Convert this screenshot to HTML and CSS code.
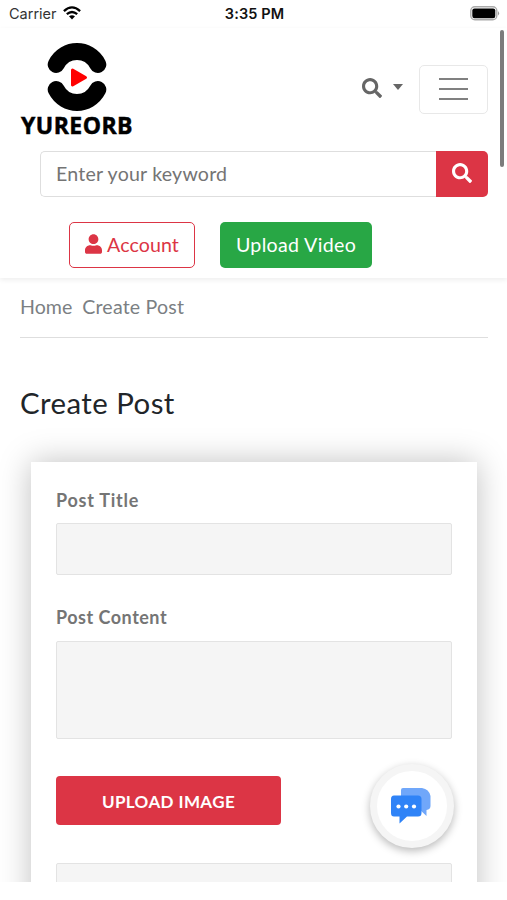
FILE: index.html
```html
<!DOCTYPE html>
<html lang="en">
<head>
<meta charset="utf-8">
<title>Create Post</title>
<link rel="stylesheet" href="styles.css">
</head>
<body>
<div class="screen">
  <div class="status">
    <div class="status-left"><span class="carrier">Carrier</span>
      <svg class="wifi" viewBox="0 0 18 14"><g fill="none" stroke="#000" stroke-width="2.3"><path d="M.9 5.1Q9-2.4 17.1 5.1"/><path d="M3.8 8.2Q9 3.7 14.2 8.2"/></g><path d="M6 10.3Q9 8 12 10.3L9 13.5Z"/></svg>
    </div>
    <div class="clock">3:35 PM</div>
    <svg class="battery" viewBox="0 0 30 15"><rect x=".8" y=".8" width="26" height="13" rx="4" fill="#fff" stroke="#aaa" stroke-width="1.4"/><rect x="2.3" y="2.4" width="23" height="9.8" rx="2.2"/><path d="M28 5q2.2 2.3 0 4.6z" fill="#999"/></svg>
  </div>
  <header class="header">
    <div class="topbar">
      <a class="logo">
        <svg class="logo-mark" viewBox="0 0 60 70"><g fill="none" stroke="#000" stroke-width="17" stroke-linecap="round"><path d="M9.2 22.5C18 5.3 42 5.3 50.8 22.5"/><path d="M9.2 47.5C18 64.7 42 64.7 50.8 47.5"/></g><path d="M25.500 28L38.500 35.500L25.500 43Z" fill="#f00" stroke="#f00" stroke-width="3" stroke-linejoin="round"/></svg>
        <span class="logo-text">YUREORB</span>
      </a>
      <div class="tools">
        <svg class="tool-search" viewBox="0 0 512 512"><path fill="currentColor" d="M505 442.700L405.300 343c-4.500-4.500-10.600-7-17-7H372c27.600-35.300 44-79.700 44-128C416 93.100 322.900 0 208 0S0 93.100 0 208s93.100 208 208 208c48.300 0 92.700-16.400 128-44v16.300c0 6.400 2.500 12.500 7 17l99.700 99.700c9.400 9.400 24.600 9.400 33.900 0l28.300-28.300c9.400-9.400 9.400-24.600.1-34zM208 336c-70.700 0-128-57.200-128-128 0-70.700 57.200-128 128-128 70.700 0 128 57.200 128 128 0 70.700-57.200 128-128 128z"/></svg>
        <i class="caret"></i>
        <div class="burger"><i></i><i></i><i></i></div>
      </div>
    </div>
    <div class="search">
      <div class="search-field"><span class="t-keyword">Enter your keyword</span></div>
      <div class="search-btn"><svg viewBox="0 0 512 512"><path fill="currentColor" d="M505 442.700L405.300 343c-4.500-4.500-10.600-7-17-7H372c27.600-35.300 44-79.700 44-128C416 93.100 322.900 0 208 0S0 93.100 0 208s93.100 208 208 208c48.300 0 92.700-16.400 128-44v16.300c0 6.400 2.500 12.500 7 17l99.700 99.700c9.400 9.400 24.600 9.400 33.900 0l28.300-28.300c9.400-9.400 9.400-24.600.1-34zM208 336c-70.700 0-128-57.200-128-128 0-70.700 57.200-128 128-128 70.700 0 128 57.200 128 128 0 70.700-57.200 128-128 128z"/></svg></div>
    </div>
    <div class="actions">
      <a class="btn account"><svg viewBox="0 0 448 512"><path fill="currentColor" d="M224 256c70.700 0 128-57.300 128-128S294.700 0 224 0 96 57.300 96 128s57.300 128 128 128zm89.600 32h-16.700c-22.200 10.200-46.900 16-72.900 16s-50.600-5.800-72.900-16h-16.700C60.200 288 0 348.200 0 422.400V464c0 26.500 21.500 48 48 48h352c26.500 0 48-21.500 48-48v-41.600c0-74.200-60.200-134.400-134.400-134.400z"/></svg><span class="t-account">Account</span></a>
      <a class="btn upload"><span class="t-upload">Upload Video</span></a>
    </div>
  </header>
  <main class="main">
    <nav class="crumbs"><span class="t-home">Home</span><span class="t-crumb">Create Post</span></nav>
    <h1>Create Post</h1>
    <section class="card">
      <div class="label"><span class="t-label1">Post Title</span></div>
      <div class="field field-title"></div>
      <div class="label"><span class="t-label2">Post Content</span></div>
      <div class="field field-content"></div>
      <div class="image-btn"><span class="t-image">UPLOAD IMAGE</span></div>
      <div class="field field-next"></div>
    </section>
  </main>
  <div class="scrollbar"></div>
  <div class="chat">
    <svg viewBox="0 0 42 38"><path d="M13 1H32Q39 2 40.500 9V19Q40.500 22.500 36.500 23V29L29 22H11V3Q11 1 13 1Z" fill="#70a7fa"/><path d="M4 8.500H28Q31.500 8.500 31.500 12V26Q31.500 29.500 28 29.500H17L9.500 36.500V29.500H4Q1 29.500 1 26V12Q1 8.500 4 8.500Z" fill="#2f83f7"/><g fill="#fff"><circle cx="8.500" cy="19.500" r="2.100"/><circle cx="16.200" cy="19.500" r="2.100"/><circle cx="24" cy="19.500" r="2.100"/></g></svg>
  </div>
</div>
</body>
</html>
```
FILE: styles.css
```css
* { box-sizing: border-box; }
body { margin: 0; background: #fff; font-family: Lato, "Open Sans", sans-serif; font-size: 19.6px; }
svg { display: block; }
span { white-space: nowrap; }
.screen { position: relative; width: 507px; height: 882px; overflow: hidden; }
.status { display: grid; grid-template-columns: 1fr auto 1fr; align-items: center; height: 28px; padding: 0 7px 2px 9px; font-family: Inter, sans-serif; font-size: 14.5px; color: #111; }
.status-left { display: flex; gap: 6px; align-items: center; }
.carrier { color: #333; }
.wifi { width: 18px; height: 14px; }
.clock { font-weight: 600; letter-spacing: .1px; }
.battery { width: 30px; height: 15px; justify-self: end; }
.header { height: 250px; padding: 14px 19px 0 20px; box-shadow: 0 2px 5px rgba(0,0,0,.07); }
.topbar { display: flex; justify-content: space-between; height: 109px; }
.logo { width: 114px; display: flex; flex-direction: column; align-items: center; }
.logo-mark { width: 60px; height: 70px; }
.logo-text { margin-top: -1px; font: 700 23px/28px "Open Sans", sans-serif; letter-spacing: .45px; -webkit-text-stroke: .5px #000; color: #000; }
.tools { display: flex; align-items: center; height: 50px; margin-top: 22px; color: #666; }
.tool-search { width: 20px; height: 20px; margin-top: -2px; }
.caret { margin: -5px 16px 0 11px; border: 5.5px solid transparent; border-top: 6px solid #666; border-bottom: 0; }
.burger { width: 69px; height: 49px; border: 1px solid #e8e8e8; border-radius: 5px; display: flex; flex-direction: column; align-items: center; justify-content: center; gap: 8px; }
.burger i { width: 29px; height: 2px; background: #808080; }
.search { display: flex; height: 46px; margin-left: 20px; }
.search-field { flex: 1; display: flex; align-items: center; padding: 0 0 2px 15px; border: 1px solid #dedede; border-right: 0; border-radius: 5px 0 0 5px; color: #747474; }
.search-btn { width: 52px; display: flex; justify-content: center; padding-top: 12px; background: #dc3545; color: #fff; border-radius: 0 5px 5px 0; }
.search-btn svg { width: 20px; height: 20px; }
.t-keyword { letter-spacing: .2px; }
.actions { display: flex; gap: 25px; margin: 25px 0 0 49px; }
.btn { height: 46px; padding-bottom: 2px; border-radius: 5px; display: flex; align-items: center; justify-content: center; gap: 5px; }
.account { width: 126px; border: 1px solid #dc3545; color: #dc3545; }
.account svg { width: 17px; height: 20px; }
.t-account { letter-spacing: .1px; }
.upload { width: 152px; background: #28a745; color: #fff; }
.t-upload { letter-spacing: .33px; }
.main { padding: 0 19px 0 20px; }
.crumbs { display: flex; gap: 10px; height: 60px; padding-top: 17px; line-height: 24px; border-bottom: 1px solid #dedede; color: #7b7f83; }
.t-crumb { letter-spacing: .18px; }
h1 { margin: 46px 0 0; height: 78px; font-size: 29.4px; line-height: 38px; font-weight: 400; letter-spacing: .45px; color: #212529; }
.card { margin: 0 11px; height: 500px; padding: 25px 25px 0; background: #fff; box-shadow: 0 0 30px rgba(0,0,0,.25); }
.label { height: 36px; line-height: 26px; font-size: 18px; font-weight: 700; color: #757575; }
.t-label1 { letter-spacing: .75px; }
.t-label2 { letter-spacing: .5px; }
.field { background: #f5f5f5; border: 1px solid #e3e3e3; border-radius: 2px; }
.field-title { height: 52px; margin-bottom: 29px; }
.field-content { height: 98px; }
.label + .field-content { margin-top: 1px; }
.image-btn { width: 225px; height: 49px; margin: 37px 0 38px; display: flex; align-items: center; justify-content: center; border-radius: 4px; background: #dc3545; color: #fff; font-size: 17px; font-weight: 700; padding-top: 2px; }
.t-image { letter-spacing: .4px; }
.field-next { height: 60px; }
.scrollbar { position: absolute; left: 500px; top: 30px; width: 4px; height: 137px; border-radius: 2px; background: #7c7c7c; }
.chat { position: absolute; left: 370px; top: 764px; width: 84px; height: 84px; border: 7px solid #f5f5f5; border-radius: 50%; background: #fff; display: flex; align-items: center; justify-content: center; box-shadow: 0 3px 8px rgba(0,0,0,.28); }
.chat svg { width: 42px; height: 38px; margin-left: -2px; }
```
